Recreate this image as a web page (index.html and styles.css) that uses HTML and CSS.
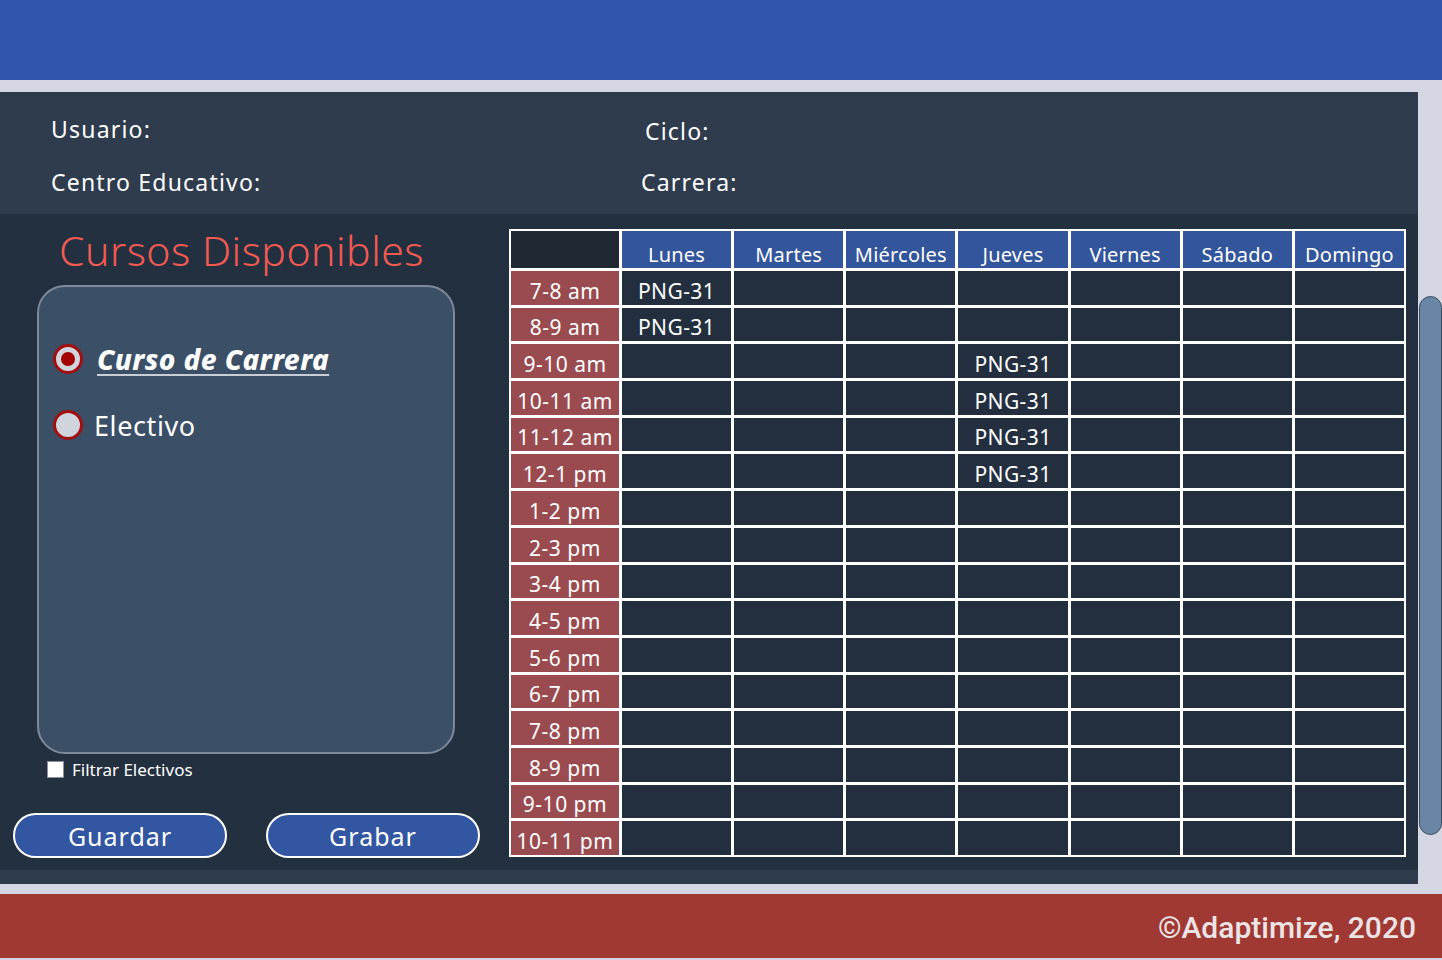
FILE: index.html
```html
<!DOCTYPE html>
<html lang="es">
<head>
<meta charset="utf-8">
<title>Horario</title>
<link rel="stylesheet" href="styles.css">
</head>
<body>
<header class="topbar"></header>
<div class="main">
  <div class="content">
    <section class="info">
      <div class="info-col">
        <div class="info-item usuario">Usuario:</div>
        <div class="info-item">Centro Educativo:</div>
      </div>
      <div class="info-col right">
        <div class="info-item ciclo">Ciclo:</div>
        <div class="info-item">Carrera:</div>
      </div>
    </section>
    <section class="work">
      <div class="left">
        <h1 class="title">Cursos Disponibles</h1>
        <div class="box">
          <label class="radio-row selected">
            <span class="radio on"></span>
            <span class="radio-label bold">Curso de Carrera</span>
          </label>
          <label class="radio-row">
            <span class="radio"></span>
            <span class="radio-label">Electivo</span>
          </label>
        </div>
        <label class="check-row"><span class="checkbox"></span><span>Filtrar Electivos</span></label>
        <div class="buttons">
          <button class="btn">Guardar</button>
          <button class="btn">Grabar</button>
        </div>
      </div>
      <div class="schedule">
        <div class="cell corner"></div>
        <div class="cell head">Lunes</div>
        <div class="cell head">Martes</div>
        <div class="cell head">Miércoles</div>
        <div class="cell head">Jueves</div>
        <div class="cell head">Viernes</div>
        <div class="cell head">Sábado</div>
        <div class="cell head">Domingo</div>

        <div class="cell time">7-8 am</div><div class="cell">PNG-31</div><div class="cell"></div><div class="cell"></div><div class="cell"></div><div class="cell"></div><div class="cell"></div><div class="cell"></div>
        <div class="cell time">8-9 am</div><div class="cell">PNG-31</div><div class="cell"></div><div class="cell"></div><div class="cell"></div><div class="cell"></div><div class="cell"></div><div class="cell"></div>
        <div class="cell time">9-10 am</div><div class="cell"></div><div class="cell"></div><div class="cell"></div><div class="cell">PNG-31</div><div class="cell"></div><div class="cell"></div><div class="cell"></div>
        <div class="cell time">10-11 am</div><div class="cell"></div><div class="cell"></div><div class="cell"></div><div class="cell">PNG-31</div><div class="cell"></div><div class="cell"></div><div class="cell"></div>
        <div class="cell time">11-12 am</div><div class="cell"></div><div class="cell"></div><div class="cell"></div><div class="cell">PNG-31</div><div class="cell"></div><div class="cell"></div><div class="cell"></div>
        <div class="cell time">12-1 pm</div><div class="cell"></div><div class="cell"></div><div class="cell"></div><div class="cell">PNG-31</div><div class="cell"></div><div class="cell"></div><div class="cell"></div>
        <div class="cell time">1-2 pm</div><div class="cell"></div><div class="cell"></div><div class="cell"></div><div class="cell"></div><div class="cell"></div><div class="cell"></div><div class="cell"></div>
        <div class="cell time">2-3 pm</div><div class="cell"></div><div class="cell"></div><div class="cell"></div><div class="cell"></div><div class="cell"></div><div class="cell"></div><div class="cell"></div>
        <div class="cell time">3-4 pm</div><div class="cell"></div><div class="cell"></div><div class="cell"></div><div class="cell"></div><div class="cell"></div><div class="cell"></div><div class="cell"></div>
        <div class="cell time">4-5 pm</div><div class="cell"></div><div class="cell"></div><div class="cell"></div><div class="cell"></div><div class="cell"></div><div class="cell"></div><div class="cell"></div>
        <div class="cell time">5-6 pm</div><div class="cell"></div><div class="cell"></div><div class="cell"></div><div class="cell"></div><div class="cell"></div><div class="cell"></div><div class="cell"></div>
        <div class="cell time">6-7 pm</div><div class="cell"></div><div class="cell"></div><div class="cell"></div><div class="cell"></div><div class="cell"></div><div class="cell"></div><div class="cell"></div>
        <div class="cell time">7-8 pm</div><div class="cell"></div><div class="cell"></div><div class="cell"></div><div class="cell"></div><div class="cell"></div><div class="cell"></div><div class="cell"></div>
        <div class="cell time">8-9 pm</div><div class="cell"></div><div class="cell"></div><div class="cell"></div><div class="cell"></div><div class="cell"></div><div class="cell"></div><div class="cell"></div>
        <div class="cell time">9-10 pm</div><div class="cell"></div><div class="cell"></div><div class="cell"></div><div class="cell"></div><div class="cell"></div><div class="cell"></div><div class="cell"></div>
        <div class="cell time">10-11 pm</div><div class="cell"></div><div class="cell"></div><div class="cell"></div><div class="cell"></div><div class="cell"></div><div class="cell"></div><div class="cell"></div>
      </div>
    </section>
    <div class="strip"></div>
  </div>
  <div class="scrolltrack"><div class="thumb"></div></div>
</div>
<footer class="footer">©Adaptimize, 2020</footer>
</body>
</html>
```

FILE: styles.css
```css
* { box-sizing: border-box; }
html, body { margin: 0; padding: 0; }
body {
  width: 1442px;
  height: 960px;
  overflow: hidden;
  background: #d4d6e3;
  font-family: "Noto Sans", "Lato", sans-serif;
  color: #ffffff;
}
.topbar {
  height: 80px;
  background: #3155ab;
  margin-bottom: 12px;
}
.main {
  display: flex;
  height: 792px;
}
.content {
  width: 1418px;
  display: flex;
  flex-direction: column;
}
.info {
  height: 122px;
  background: #2e3c4e;
  display: flex;
  padding: 22px 0 0 51px;
}
.info-col {
  width: 590px;
  display: flex;
  flex-direction: column;
  gap: 23px;
}
.info-col.right { padding-top: 2px; gap: 21px; }
.info-item {
  font-size: 23px;
  line-height: 30px;
  font-weight: 400;
  letter-spacing: 1.2px;
}
.ciclo { padding-left: 4px; }
.work {
  height: 656px;
  background: #233040;
  display: flex;
}
.strip {
  height: 14px;
  background: #2e3c4e;
}
.left {
  width: 509px;
  display: flex;
  flex-direction: column;
}
.title {
  margin: 10px 0 0 59px;
  font-size: 41px;
  line-height: 52px;
  font-weight: 300;
  color: #f25a52;
  letter-spacing: 0.5px;
}
.box {
  margin: 9px 0 0 37px;
  width: 418px;
  height: 469px;
  border: 2px solid #7e8a9a;
  border-radius: 28px;
  background: #3b4f67;
  display: flex;
  flex-direction: column;
  padding: 53px 0 0 14px;
  gap: 28px;
}
.radio-row {
  display: flex;
  align-items: center;
  gap: 14px;
  height: 38px;
}
.radio {
  width: 30px;
  height: 30px;
  border-radius: 50%;
  border: 3px solid #a30f0f;
  background: #d0d4dc;
  flex: none;
  display: flex;
  align-items: center;
  justify-content: center;
}
.radio.on::after {
  content: "";
  width: 14px;
  height: 14px;
  border-radius: 50%;
  background: #a30000;
}
.radio-label {
  font-size: 27px;
  font-weight: 400;
  margin-left: -3px;
  letter-spacing: 0.6px;
}
.radio-label.bold {
  margin-left: 0;
  font-size: 28px;
  font-weight: 800;
  font-style: italic;
  letter-spacing: 0.4px;
  text-decoration: underline;
  text-decoration-thickness: 2px;
  text-underline-offset: 4px;
  text-decoration-color: #c8cdd6;
}
.check-row {
  display: flex;
  align-items: center;
  gap: 8px;
  margin: 4px 0 0 47px;
  font-size: 17px;
  height: 22px;
}
.checkbox {
  width: 17px;
  height: 17px;
  background: #ffffff;
  border: 1px solid #8a8f99;
}
.buttons {
  display: flex;
  gap: 39px;
  margin: 33px 0 0 13px;
}
.btn {
  width: 214px;
  height: 45px;
  border: 2px solid #ffffff;
  border-radius: 23px;
  background: #3256a2;
  color: #ffffff;
  font-family: inherit;
  font-size: 25px;
  font-weight: 400;
  letter-spacing: 1px;
  padding: 0;
}
.schedule {
  margin-top: 15px;
  width: 897px;
  height: 628px;
  background: #ffffff;
  padding: 2px;
  display: grid;
  grid-template-columns: 108px repeat(7, 1fr);
  grid-template-rows: 37px repeat(16, 1fr);
  gap: 3px;
}
.cell {
  background: #232f3e;
  font-size: 21px;
  display: flex;
  align-items: flex-end;
  justify-content: center;
  padding-bottom: 0;
  line-height: 27px;
  letter-spacing: 0.4px;
  white-space: nowrap;
}
.cell.corner { background: #1f2833; }
.cell.head { background: #32559c; font-size: 20px; letter-spacing: 0.2px; }
.cell.time { background: #9a4b4f; font-size: 21px; letter-spacing: 0.5px; }
.scrolltrack {
  width: 24px;
  padding: 204px 0 0 1px;
}
.thumb {
  height: 539px;
  background: #6a86a6;
  border: 1px solid #3d4d60;
  border-radius: 12px;
}
.footer {
  margin-top: 10px;
  height: 64px;
  background: #a03834;
  color: #ebe4e4;
  font-family: "Roboto", sans-serif;
  font-weight: 500;
  font-size: 30px;
  display: flex;
  align-items: center;
  justify-content: flex-end;
  padding: 2px 26px 0 0;
}
```
